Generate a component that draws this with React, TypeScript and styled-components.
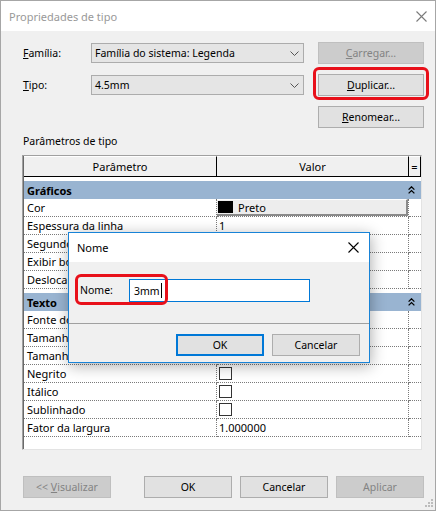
import React from 'react';
import styled, { createGlobalStyle, css } from 'styled-components';

const GlobalStyle = createGlobalStyle`
  html, body {
    margin: 0;
    padding: 0;
    background: #fff;
  }
  body {
    font-family: "Noto Sans", "Segoe UI", sans-serif;
    font-size: 10.5px;
    color: #000;
  }
  * {
    box-sizing: border-box;
  }
`;

const Window = styled.div`
  position: relative;
  width: 436px;
  height: 511px;
  border: 1px solid #a6a6a6;
  background: #f0f0f0;
  display: flex;
  flex-direction: column;
`;

const TitleBar = styled.div`
  flex: none;
  height: 30px;
  background: #fff;
  display: flex;
  align-items: center;
  justify-content: space-between;
  padding: 0 8px;
`;

const TitleText = styled.span<{ $dim?: boolean }>`
  font-size: 11px;
  color: ${p => (p.$dim ? '#999999' : '#000')};
`;

const Body = styled.div`
  flex: 1;
  display: flex;
  flex-direction: column;
  padding: 11px 10px 0 21px;
`;

const TopGrid = styled.div`
  display: grid;
  grid-template-columns: 69px 227px 106px;
  grid-template-rows: 22px 22px 21px;
  row-gap: 10px;
  align-items: center;
`;

const FieldLabel = styled.span`
  padding-left: 1px;
`;

const Combo = styled.div`
  width: 213px;
  height: 20px;
  background: #e5e5e5;
  border: 1px solid #acacac;
  display: flex;
  align-items: center;
  justify-content: space-between;
  padding: 0 4px 0 3px;
`;

const Button = styled.button<{ $w: number; $off?: boolean; $primary?: boolean }>`
  width: ${p => p.$w}px;
  height: 22px;
  padding: 0;
  font: inherit;
  color: #000;
  background: #e1e1e1;
  border: 1px solid #adadad;
  display: flex;
  align-items: center;
  justify-content: center;
  white-space: pre;
  ${p =>
    p.$off &&
    css`
      background: #cccccc;
      border-color: #bfbfbf;
      color: #838383;
    `}
  ${p =>
    p.$primary &&
    css`
      border: 2px solid #0078d7;
    `}
`;

const Highlight = styled.div`
  position: relative;
  &::after {
    content: '';
    position: absolute;
    inset: -7px -5px -4px -5px;
    border: 3px solid #e8101a;
    border-radius: 6px;
    pointer-events: none;
  }
`;

const SectionLabel = styled.div`
  margin: 7px 0 6px 0;
  line-height: 15px;
  padding-left: 1px;
`;

const Frame = styled.div`
  width: 400px;
  height: 295px;
  border-top: 1px solid #a0a0a0;
  border-left: 1px solid #a0a0a0;
  border-right: 1px solid #e3e3e3;
  border-bottom: 1px solid #e3e3e3;
  background: #fff;
`;

const PropGrid = styled.div`
  height: 100%;
  border-left: 1px solid #696969;
  display: grid;
  grid-template-columns: 193px 192px 12px;
  align-content: start;
  font-size: 11px;
`;

const HeadCell = styled.div`
  height: 21px;
  background: #f0f0f0;
  border-top: 1px solid #fff;
  border-bottom: 1px solid #000;
  border-right: 1px solid #000;
  display: flex;
  align-items: center;
  justify-content: center;
`;

const GroupRow = styled.div`
  grid-column: 1 / -1;
  margin-top: 4px;
  height: 18px;
  background: #99b4d1;
  font-weight: 700;
  display: flex;
  align-items: center;
  justify-content: space-between;
  padding: 0 6px 0 3px;
`;

const Cell = styled.div<{ $pad?: number; $noRight?: boolean }>`
  height: 18px;
  border-bottom: 1px dotted #7a7a7a;
  border-right: ${p => (p.$noRight ? 'none' : '1px dotted #7a7a7a')};
  display: flex;
  align-items: center;
  padding-left: ${p => p.$pad ?? 3}px;
  white-space: nowrap;
  overflow: hidden;
`;

const ColorButton = styled.div`
  flex: 1;
  align-self: stretch;
  margin-left: -2px;
  display: flex;
  align-items: center;
  gap: 5px;
  padding-left: 1px;
  background: #ededed;
  border-top: 1px solid #fff;
  border-right: 2px solid #8a8a8a;
  border-bottom: 2px solid #8a8a8a;
`;

const Swatch = styled.span`
  width: 15px;
  height: 12px;
  background: #000;
`;

const Check = styled.span`
  width: 13px;
  height: 13px;
  background: #fff;
  border: 1px solid #333;
`;

const Footer = styled.div`
  display: flex;
  gap: 8px;
  margin-top: 26px;
  padding-left: 1px;
  & > :first-child {
    margin-right: 25px;
  }
`;

const Grip = styled.svg`
  position: absolute;
  right: 1px;
  bottom: 2px;
`;

const Dialog = styled.div`
  position: absolute;
  left: 67px;
  top: 231px;
  width: 302px;
  height: 131px;
  border: 1px solid #1883d7;
  background: #f0f0f0;
  box-shadow: 1px 3px 14px rgba(0, 0, 0, 0.32);
  display: flex;
  flex-direction: column;
`;

const DialogTitle = styled.div`
  flex: none;
  height: 29px;
  background: #fff;
  display: flex;
  align-items: center;
  justify-content: space-between;
  padding: 0 10px 0 8px;
`;

const DialogBody = styled.div`
  position: relative;
  height: 61px;
  display: flex;
  align-items: flex-start;
  padding: 17px 0 0 11px;
`;

const DialogLabel = styled.span`
  width: 49px;
  line-height: 23px;
`;

const TextInput = styled.div`
  width: 181px;
  height: 23px;
  background: #fff;
  border: 1px solid #0078d7;
  display: flex;
  align-items: center;
  padding-left: 4px;
`;

const Caret = styled.span`
  width: 1px;
  height: 15px;
  margin-left: 1px;
  background: #000;
`;

const DialogMark = styled.div`
  position: absolute;
  left: 6px;
  top: 12px;
  width: 93px;
  height: 31px;
  border: 3px solid #e8101a;
  border-radius: 6px;
  pointer-events: none;
`;

const Separator = styled.div`
  height: 1px;
  background: #a0a0a0;
`;

const DialogFooter = styled.div`
  display: flex;
  justify-content: flex-end;
  gap: 8px;
  padding: 10px 9px 0 0;
`;

const CloseIcon: React.FC<{ color: string }> = ({ color }) => (
  <svg width="11" height="11" viewBox="0 0 11 11">
    <path d="M0.5 0.5 L10.5 10.5 M10.5 0.5 L0.5 10.5" stroke={color} strokeWidth="1.1" fill="none" />
  </svg>
);

const Chevron = () => (
  <svg width="9" height="5" viewBox="0 0 9 5">
    <path d="M0.5 0.5 L4.5 4.5 L8.5 0.5" stroke="#555" strokeWidth="1" fill="none" />
  </svg>
);

const Collapse = () => (
  <svg width="7" height="8" viewBox="0 0 7 8">
    <path d="M0.6 3.6 L3.5 0.8 L6.4 3.6 M0.6 7.4 L3.5 4.6 L6.4 7.4" stroke="#000" strokeWidth="1.3" fill="none" />
  </svg>
);

type Row = { name: string; value?: string; kind?: 'color' | 'check' };

const groups: { title: string; rows: Row[] }[] = [
  {
    title: 'Gráficos',
    rows: [
      { name: 'Cor', kind: 'color', value: 'Preto' },
      { name: 'Espessura da linha', value: '1' },
      { name: 'Segundo plano', value: 'Opaco' },
      { name: 'Exibir borda', kind: 'check' },
      { name: 'Deslocamento da linha guia/borda', value: '2.0320 mm' },
    ],
  },
  {
    title: 'Texto',
    rows: [
      { name: 'Fonte do texto', value: 'Arial' },
      { name: 'Tamanho do texto', value: '4.5000 mm' },
      { name: 'Tamanho da guia', value: '12.7000 mm' },
      { name: 'Negrito', kind: 'check' },
      { name: 'Itálico', kind: 'check' },
      { name: 'Sublinhado', kind: 'check' },
      { name: 'Fator da largura', value: '1.000000' },
    ],
  },
];

const renderValue = (row: Row) => {
  if (row.kind === 'color') {
    return (
      <ColorButton>
        <Swatch />
        {row.value}
      </ColorButton>
    );
  }
  if (row.kind === 'check') return <Check />;
  return row.value;
};

const App: React.FC = () => {
  return (
    <>
      <GlobalStyle />
      <Window>
        <TitleBar>
          <TitleText $dim>Propriedades de tipo</TitleText>
          <CloseIcon color="#7a7a7a" />
        </TitleBar>

        <Body>
          <TopGrid>
            <FieldLabel>
              <u>F</u>amília:
            </FieldLabel>
            <Combo>
              Família do sistema: Legenda
              <Chevron />
            </Combo>
            <Button $w={106} $off>
              <u>C</u>arregar...
            </Button>

            <FieldLabel>
              <u>T</u>ipo:
            </FieldLabel>
            <Combo>
              4.5mm
              <Chevron />
            </Combo>
            <Highlight>
              <Button $w={106}>
                <u>D</u>uplicar...
              </Button>
            </Highlight>

            <span />
            <span />
            <Button $w={106}>
              <u>R</u>enomear...
            </Button>
          </TopGrid>

          <SectionLabel>Parâmetros de tipo</SectionLabel>

          <Frame>
            <PropGrid>
              <HeadCell>Parâmetro</HeadCell>
              <HeadCell>Valor</HeadCell>
              <HeadCell>=</HeadCell>
              {groups.map(g => (
                <React.Fragment key={g.title}>
                  <GroupRow>
                    {g.title}
                    <Collapse />
                  </GroupRow>
                  {g.rows.map(r => (
                    <React.Fragment key={r.name}>
                      <Cell>{r.name}</Cell>
                      <Cell $pad={2}>{renderValue(r)}</Cell>
                      <Cell $noRight />
                    </React.Fragment>
                  ))}
                </React.Fragment>
              ))}
            </PropGrid>
          </Frame>

          <Footer>
            <Button $w={88} $off>
              {'<< '}
              <u>V</u>isualizar
            </Button>
            <Button $w={88}>OK</Button>
            <Button $w={88}>Cancelar</Button>
            <Button $w={88} $off>
              Aplicar
            </Button>
          </Footer>
        </Body>

        <Grip width="9" height="9" viewBox="0 0 9 9">
          <g fill="#bcbcbc">
            <rect x="6" y="0" width="2" height="2" />
            <rect x="3" y="3" width="2" height="2" />
            <rect x="6" y="3" width="2" height="2" />
            <rect x="0" y="6" width="2" height="2" />
            <rect x="3" y="6" width="2" height="2" />
            <rect x="6" y="6" width="2" height="2" />
          </g>
        </Grip>

        <Dialog>
          <DialogTitle>
            <TitleText>Nome</TitleText>
            <CloseIcon color="#000" />
          </DialogTitle>
          <DialogBody>
            <DialogLabel>Nome:</DialogLabel>
            <TextInput>
              3mm
              <Caret />
            </TextInput>
            <DialogMark />
          </DialogBody>
          <Separator />
          <DialogFooter>
            <Button $w={88} $primary>
              OK
            </Button>
            <Button $w={88}>Cancelar</Button>
          </DialogFooter>
        </Dialog>
      </Window>
    </>
  );
};

export default App;
